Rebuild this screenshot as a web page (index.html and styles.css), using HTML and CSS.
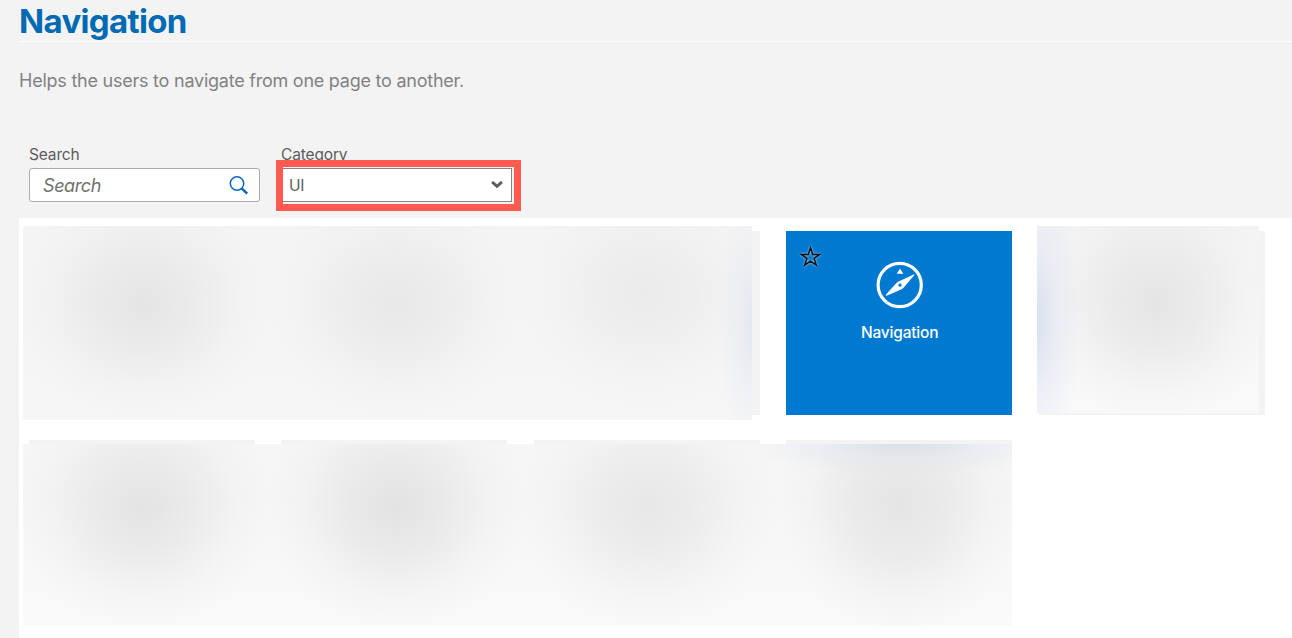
FILE: index.html
```html
<!DOCTYPE html>
<html lang="en">
<head>
<meta charset="utf-8">
<title>Navigation</title>
<link rel="stylesheet" href="styles.css">
</head>
<body>
<main class="page">
  <h1 class="title"><span class="title-text">Navigation</span></h1>
  <p class="description"><span class="description-text">Helps the users to navigate from one page to another.</span></p>
  <form class="filters">
    <div class="field">
      <span class="label">Search</span>
      <div class="search">
        <span class="placeholder">Search</span>
        <svg class="search-icon" width="20" height="20" viewBox="0 0 20 20">
          <circle cx="8" cy="8.5" r="6.7" fill="none" stroke="#0a66c0" stroke-width="1.5"/>
          <path d="M12.6 13.3 18.2 18.7" stroke="#0a66c0" stroke-width="2.5"/>
        </svg>
      </div>
    </div>
    <div class="field category">
      <span class="label">Category</span>
      <div class="select">
        <span class="value">UI</span>
        <svg width="12" height="8" viewBox="0 0 12 8"><path d="M1.1 1 6 5.3 10.9 1" fill="none" stroke="#5c5c5c" stroke-width="2.9"/></svg>
      </div>
      <div class="highlight"></div>
    </div>
  </form>
  <section class="panel">
    <div class="tiles">
      <div class="tile"></div>
      <div class="tile"></div>
      <div class="tile"></div>
      <div class="tile active">
        <svg class="star" width="26" height="26" viewBox="0 0 26 26">
          <path d="M12.5 3.6 14.7 10.4H21.7L16.1 14.4 18.3 21.2 12.5 17.1 6.7 21.2 8.9 14.4 3.3 10.4H10.3Z" fill="none" stroke="#111" stroke-width="1.5"/>
        </svg>
        <svg class="compass" width="48" height="48" viewBox="0 0 48 48">
          <circle cx="23.7" cy="24" r="21.6" fill="none" stroke="#fff" stroke-width="3.2"/>
          <path d="M24 7.6 27.3 12.7H20.7Z" fill="#fff"/>
          <path d="M38.6 13.8 28 26.2Q26.6 27.7 24.5 28.7L10.7 34.8Q9.4 34.8 10 33.4L20.2 22.3Q21.5 20.8 23.6 20L37.8 13.5Q38.8 13.2 38.6 13.8ZM24 22.4A1.7 1.7 0 1 0 24 25.8 1.7 1.7 0 1 0 24 22.4Z" fill="#fff" fill-rule="evenodd"/>
        </svg>
        <span class="tile-label">Navigation</span>
      </div>
      <div class="tile"></div>
      <div class="tile"></div>
      <div class="tile"></div>
      <div class="tile"></div>
      <div class="tile"></div>
    </div>
    <div class="veil veil-left"></div>
    <div class="veil veil-right"></div>
    <div class="veil veil-bottom"></div>
  </section>
</main>
</body>
</html>
```
FILE: styles.css
```css
* { box-sizing: border-box; }
body {
  margin: 0;
  background: #f3f3f3;
  font-family: Inter, "Liberation Sans", sans-serif;
  color: #5c5c5c;
}
.page {
  display: flex;
  flex-direction: column;
  height: 638px;
  padding-left: 19px;
  overflow: hidden;
}
.title {
  margin: 0;
  height: 42px;
  border-bottom: 1.5px solid #fcfcfc;
  font-size: 33px;
  line-height: 43px;
  font-weight: 700;
  letter-spacing: -0.66px;
  color: #006ab3;
}
.description {
  margin: 28px 0 0;
  font-size: 18px;
  line-height: 22px;
  color: #828282;
}
.description-text { letter-spacing: -0.235px; }
.filters {
  display: flex;
  gap: 21px;
  margin: 54px 0 0 10px;
  height: 72px;
}
.field {
  position: relative;
  width: 231px;
}
.label {
  display: block;
  height: 22px;
  font-size: 15.5px;
  line-height: 17px;
  letter-spacing: -0.15px;
}
.search, .select {
  display: flex;
  align-items: center;
  justify-content: space-between;
  height: 34px;
  background: #fff;
  border: 1px solid #a9adb3;
  border-radius: 3px;
}
.search { padding: 0 10px 0 13px; }
.placeholder {
  font-size: 18px;
  font-style: italic;
  letter-spacing: -0.4px;
  color: #707070;
}
.select {
  padding: 0 8px 0 7px;
  border-color: #858585;
  border-radius: 0;
  font-size: 15.5px;
}
.value { letter-spacing: -0.3px; }
.highlight {
  position: absolute;
  left: -5px;
  top: 14px;
  width: 245px;
  height: 51px;
  border: 7px solid #ff5a4f;
}
.panel {
  position: relative;
  flex: 1;
  background: #fff;
}
.tiles {
  display: grid;
  grid-template-columns: repeat(5, 226px);
  grid-auto-rows: 184px;
  gap: 25px 26.4px;
  padding: 13px 0 0 10px;
}
.tile { background: #f3f3f3; }
.active {
  position: relative;
  display: flex;
  flex-direction: column;
  align-items: center;
  padding: 30px 0 0 1px;
  background: #007ad1;
}
.star {
  position: absolute;
  left: 12px;
  top: 13px;
  filter: drop-shadow(0 0 1px #b9d9f5);
}
.tile-label {
  margin-top: 14px;
  font-size: 15.5px;
  line-height: 19px;
  font-weight: 500;
  letter-spacing: -0.2px;
  color: #fff;
}
.veil { position: absolute; }
.veil-left {
  left: 4px;
  top: 7.5px;
  width: 729px;
  height: 194px;
  background:
    radial-gradient(ellipse 34px 130px at 100% 50%, #e3e7f1, #e3e7f166 45%, #e3e7f100),
    radial-gradient(ellipse 130px 115px at 120px 78px, #e5e5e5, #e5e5e5aa 35%, #e5e5e533 72%, #e5e5e500),
    radial-gradient(ellipse 130px 115px at 373px 78px, #e8e8e8, #e8e8e8aa 35%, #e8e8e833 72%, #e8e8e800),
    radial-gradient(ellipse 130px 115px at 622px 68px, #ebebeb, #ebebebaa 35%, #ebebeb33 72%, #ebebeb00),
    linear-gradient(#f4f4f4, #f6f6f6);
}
.veil-right {
  left: 1018px;
  top: 7.5px;
  width: 222px;
  height: 187px;
  background:
    radial-gradient(ellipse 44px 160px at 0 50%, #dae0ef, #dde3f077 45%, #dae0ef00),
    radial-gradient(ellipse 125px 125px at 118px 77px, #e5e5e5, #e5e5e5aa 35%, #e5e5e533 72%, #e5e5e500),
    linear-gradient(#f4f4f4, #fafafa);
}
.veil-bottom {
  left: 4px;
  top: 226px;
  width: 989px;
  height: 182px;
  background:
    radial-gradient(ellipse 160px 32px at 880px 0, #dbe0ea, #dfe4ee77 45%, #dbe0ea00),
    radial-gradient(ellipse 130px 125px at 120px 63px, #e4e4e4, #e4e4e4aa 35%, #e4e4e433 72%, #e4e4e400),
    radial-gradient(ellipse 130px 125px at 373px 63px, #e3e3e3, #e3e3e3aa 35%, #e3e3e333 72%, #e3e3e300),
    radial-gradient(ellipse 130px 125px at 625px 64px, #e7e7e7, #e7e7e7aa 35%, #e7e7e733 72%, #e7e7e700),
    radial-gradient(ellipse 120px 135px at 877px 58px, #e5e5e5, #e5e5e5aa 40%, #e5e5e533 75%, #e5e5e500),
    linear-gradient(#f6f6f6 30%, #fafafa);
}
```
